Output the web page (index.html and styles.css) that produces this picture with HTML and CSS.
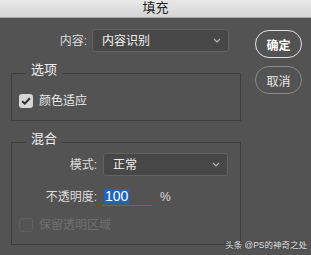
FILE: index.html
```html
<!DOCTYPE html>
<html lang="zh">
<head>
    <meta charset="UTF-8">
    <title>填充</title>
    <link rel="stylesheet" href="styles.css">
</head>
<body>
    <div class="titlebar">填充</div>
    <div class="dialog">
        <div class="main">
            <div class="row content-row">
                <label class="field-label">内容:</label>
                <div class="select">
                    <span>内容识别</span>
                    <svg class="chevron" width="8" height="5" viewBox="0 0 8 5"><path d="M1 1 L4 4 L7 1" fill="none" stroke="#bdbdbd" stroke-width="1.1"/></svg>
                </div>
            </div>

            <fieldset class="group options">
                <legend>选项</legend>
                <div class="group-body">
                    <div class="check-row">
                        <span class="checkbox checked">
                            <svg width="10" height="8" viewBox="0 0 10 8"><path d="M1.2 4.2 L3.8 6.6 L8.8 1.3" fill="none" stroke="#2e2e2e" stroke-width="2"/></svg>
                        </span>
                        <span class="check-label">颜色适应</span>
                    </div>
                </div>
            </fieldset>

            <fieldset class="group blend">
                <legend>混合</legend>
                <div class="group-body">
                    <div class="row mode-row">
                        <label class="field-label">模式:</label>
                        <div class="select">
                            <span>正常</span>
                            <svg class="chevron" width="8" height="5" viewBox="0 0 8 5"><path d="M1 1 L4 4 L7 1" fill="none" stroke="#bdbdbd" stroke-width="1.1"/></svg>
                        </div>
                    </div>
                    <div class="row opacity-row">
                        <label class="field-label">不透明度:</label>
                        <div class="number-input"><span class="selected">100</span></div>
                        <span class="unit">%</span>
                    </div>
                    <div class="check-row disabled">
                        <span class="checkbox"></span>
                        <span class="check-label">保留透明区域</span>
                    </div>
                </div>
            </fieldset>
        </div>

        <div class="actions">
            <button class="btn primary">确定</button>
            <button class="btn">取消</button>
        </div>
    </div>
    <div class="watermark">头条 @PS的神奇之处</div>
</body>
</html>
```

FILE: styles.css
```css
body {
    margin: 0;
    width: 311px;
    height: 255px;
    background-color: #535353;
    font-family: "Liberation Sans", "Noto Sans CJK SC", sans-serif;
    font-size: 12px;
    color: #e6e6e6;
    overflow: hidden;
    position: relative;
}

.titlebar {
    height: 17px;
    line-height: 15px;
    text-align: center;
    font-size: 13px;
    color: #1e1e1e;
    background: linear-gradient(#e9e9e9, #d5d5d5);
    border-bottom: 1px solid #a9a9a9;
}

.dialog {
    display: flex;
    padding-top: 11px;
}

.main {
    width: 230px;
    padding-left: 11px;
}

.row {
    display: grid;
    align-items: center;
}

.content-row {
    grid-template-columns: 87px 137px;
    column-gap: 5px;
    margin-left: -11px;
    height: 23px;
}

.field-label {
    text-align: right;
    color: #dcdcdc;
    line-height: 14px;
}

.select {
    height: 21px;
    border: 1px solid #626262;
    border-radius: 3px;
    background-color: #474747;
    display: flex;
    align-items: center;
    justify-content: space-between;
    padding: 0 7px 0 9px;
    color: #f2f2f2;
    line-height: 14px;
}

.group {
    margin: 11px 0 0 0;
    padding: 0 0 12px 14px;
    border: 1px solid #3d3d3d;
    min-width: 0;
}

.group legend {
    padding: 0 5px 6px;
    font-size: 13px;
    line-height: 14px;
    color: #f0f0f0;
}

.group-body {
    margin-left: -7px;
}

.options .check-row {
    margin-top: 11px;
}

.check-row {
    display: flex;
    align-items: center;
    column-gap: 6px;
    height: 14px;
}

.checkbox {
    width: 14px;
    height: 14px;
    box-sizing: border-box;
    border-radius: 3px;
    display: flex;
    align-items: center;
    justify-content: center;
    border: 1px solid #666;
    background-color: #585858;
}

.checkbox.checked {
    border: none;
    background-color: #d6d6d6;
}

.check-label {
    line-height: 14px;
    color: #ececec;
}

.disabled .check-label {
    color: #6f6f6f;
}

.disabled .checkbox {
    border-color: #5f5f5f;
    background-color: #545454;
}

.mode-row {
    grid-template-columns: 78px 125px;
    column-gap: 6px;
    height: 23px;
    margin-top: 1px;
}

.opacity-row {
    grid-template-columns: 78px 50px auto;
    column-gap: 5px;
    height: 19px;
    margin-top: 11px;
}

.number-input {
    height: 18px;
    border-bottom: 1px solid #2a74d8;
    display: flex;
    align-items: center;
    padding-left: 2px;
}

.selected {
    background-color: #1f62bf;
    color: #ffffff;
    font-size: 14px;
    line-height: 15px;
    padding: 0 1px;
}

.unit {
    margin-left: 3px;
    font-size: 12px;
    color: #dcdcdc;
}

.disabled {
    margin-top: 12px;
}

.actions {
    display: flex;
    flex-direction: column;
    row-gap: 8px;
    margin-left: 14px;
    padding-top: 1px;
}

.btn {
    width: 47px;
    height: 28px;
    border-radius: 14px;
    border: 1px solid #8a8a8a;
    background: transparent;
    color: #e8e8e8;
    font-family: "Liberation Sans", "Noto Sans CJK SC", sans-serif;
    font-size: 12px;
    padding: 0;
}

.btn.primary {
    border: 1.5px solid #e4e4e4;
    color: #ffffff;
    font-weight: bold;
}

.watermark {
    position: absolute;
    right: 4px;
    bottom: 5px;
    font-size: 8.5px;
    line-height: 10px;
    color: #e8e8e8;
    text-shadow: 0 0 2px #222;
}
```
